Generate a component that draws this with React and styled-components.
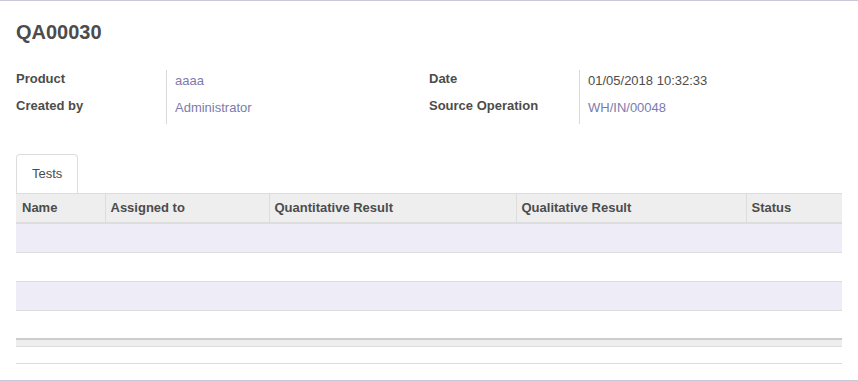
import React from 'react';
import styled, { createGlobalStyle } from 'styled-components';

const GlobalStyle = createGlobalStyle`
  body {
    margin: 0;
    font-family: "Liberation Sans", Arial, sans-serif;
    font-size: 13px;
    color: #4c4c4c;
    background: #fff;
  }
`

const Sheet = styled.div`
  box-sizing: border-box;
  height: 381px;
  border-top: 1px solid #c9c7d9;
  border-bottom: 1px solid #c9c7d9;
  padding: 0 16px;
  overflow: hidden;
`

const Title = styled.h1`
  margin: 0;
  padding-top: 18px;
  font-size: 20px;
  line-height: 26px;
  font-weight: bold;
  color: #4c4c4c;
`

const Groups = styled.div`
  display: grid;
  grid-template-columns: 1fr 1fr;
  margin-top: 25px;
`

const Group = styled.div`
  display: grid;
  grid-template-columns: 150px 1fr;
  grid-auto-rows: 27px;
`

const Label = styled.div`
  font-weight: bold;
  padding-top: 1px;
`

const Value = styled.div`
  border-left: 1px solid #d9d9d9;
  padding: 3px 0 0 8px;
  color: ${p => (p.$link ? '#7c7bad' : '#4c4c4c')};
`

const Tabs = styled.div`
  display: flex;
  margin-top: 30px;
`

const Tab = styled.div`
  padding: 0 15px;
  height: 38px;
  line-height: 38px;
  border: 1px solid #ddd;
  border-bottom: none;
  border-radius: 4px 4px 0 0;
  background: #fff;
`

const Table = styled.table`
  width: 100%;
  border-collapse: collapse;
  table-layout: fixed;
`

const Th = styled.th`
  background: #eee;
  text-align: left;
  font-weight: bold;
  height: 25px;
  line-height: 15px;
  padding: 1px 6px 2px 5px;
  border-top: 1px solid #ddd;
  border-bottom: 2px solid #ddd;
  border-left: 1px solid #ddd;
  &:first-child {
    border-left: none;
    padding-left: 6px;
  }
`

const Row = styled.tr`
  height: 29px;
  background: ${p => (p.$odd ? '#eeedf7' : '#fff')};
  border-bottom: 1px solid #ddd;
  &:last-child { border-bottom: none; }
`

const FootRow = styled.tr`
  height: 7px;
  background: #eee;
  border-top: 2px solid #ccc;
  border-bottom: 1px solid #ddd;
`

const Spacer = styled.div`
  height: 16px;
  border-bottom: 1px solid #ddd;
`

const columns = [
  { title: 'Name', width: 89 },
  { title: 'Assigned to', width: 164 },
  { title: 'Quantitative Result', width: 247 },
  { title: 'Qualitative Result', width: 230 },
  { title: 'Status', width: 96 },
];

const App = () => {
  return (
    <Sheet>
      <GlobalStyle />
      <Title>QA00030</Title>
      <Groups>
        <Group>
          <Label>Product</Label>
          <Value $link>aaaa</Value>
          <Label>Created by</Label>
          <Value $link>Administrator</Value>
        </Group>
        <Group>
          <Label>Date</Label>
          <Value>01/05/2018 10:32:33</Value>
          <Label>Source Operation</Label>
          <Value $link>WH/IN/00048</Value>
        </Group>
      </Groups>
      <Tabs>
        <Tab>Tests</Tab>
      </Tabs>
      <Table>
        <colgroup>
          {columns.map(c => <col key={c.title} style={{ width: c.width }} />)}
        </colgroup>
        <thead>
          <tr>
            {columns.map(c => <Th key={c.title}>{c.title}</Th>)}
          </tr>
        </thead>
        <tbody>
          {[0, 1, 2, 3].map(i => (
            <Row key={i} $odd={i % 2 === 0}>
              <td colSpan={5} />
            </Row>
          ))}
        </tbody>
        <tfoot>
          <FootRow>
            <td colSpan={5} />
          </FootRow>
        </tfoot>
      </Table>
      <Spacer />
    </Sheet>
  );
};

export default App;
